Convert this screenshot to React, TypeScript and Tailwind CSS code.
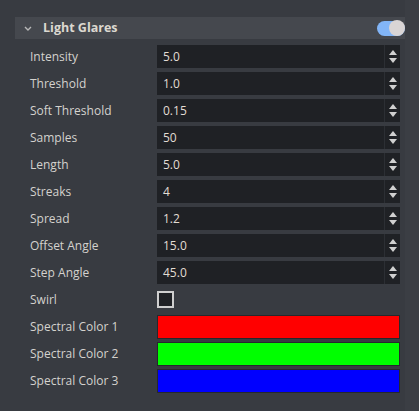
import React from 'react';

const numberRows = [
    { label: 'Intensity', value: '5.0' },
    { label: 'Threshold', value: '1.0' },
    { label: 'Soft Threshold', value: '0.15' },
    { label: 'Samples', value: '50' },
    { label: 'Length', value: '5.0' },
    { label: 'Streaks', value: '4' },
    { label: 'Spread', value: '1.2' },
    { label: 'Offset Angle', value: '15.0' },
    { label: 'Step Angle', value: '45.0' },
];

const colorRows = [
    { label: 'Spectral Color 1', color: 'bg-[#ff0000]' },
    { label: 'Spectral Color 2', color: 'bg-[#00ff00]' },
    { label: 'Spectral Color 3', color: 'bg-[#0000ff]' },
];

const Spinner: React.FC = () => (
    <div className="w-4 h-full border-l border-[#2c2f34] flex flex-col items-center justify-center gap-[3px]">
        <svg width="8" height="5" viewBox="0 0 8 5"><path d="M4 0 L8 5 L0 5 Z" fill="#d0d0d0" /></svg>
        <svg width="8" height="5" viewBox="0 0 8 5"><path d="M0 0 L8 0 L4 5 Z" fill="#d0d0d0" /></svg>
    </div>
);

const Row: React.FC<{ label: string; children: React.ReactNode }> = ({ label, children }) => (
    <div className="h-[27px] flex items-center">
        <div className="w-[142px] pl-[15px] pt-[1px] text-[12px] text-[#d4d2ce] whitespace-nowrap">{label}</div>
        <div className="w-[243px] flex items-center">{children}</div>
    </div>
);

const App: React.FC = () => {
    return (
        <div className="w-[419px] h-[411px] bg-[#383b41] flex" style={{ fontFamily: '"Open Sans", sans-serif' }}>
            <div className="w-[405px] pl-[15px] pt-[17px]">
                <div className="h-[22px] bg-[#45484e] flex items-center">
                    <svg width="8" height="5" viewBox="0 0 8 5" className="ml-[9px] mr-[11px]">
                        <path d="M1 1 L4 4 L7 1" stroke="#b8b8b8" strokeWidth="1.4" fill="none" />
                    </svg>
                    <span className="text-[12.5px] font-bold text-[#dcd8d0]">Light Glares</span>
                    <div className="ml-auto w-[28px] h-[15px] rounded-full bg-[#82b5f7] relative">
                        <div className="absolute right-0 top-[-0.5px] w-4 h-4 rounded-full bg-[#d9d5d5]" />
                    </div>
                </div>
                <div className="pt-[4px]">
                    {numberRows.map(r => (
                        <Row key={r.label} label={r.label}>
                            <div className="w-full h-[23px] bg-[#1f2125] flex items-center">
                                <span className="flex-1 pl-[6px] pt-[1px] text-[12px] text-[#e2ddd4]">{r.value}</span>
                                <Spinner />
                            </div>
                        </Row>
                    ))}
                    <Row label="Swirl">
                        <div className="w-[17px] h-[17px] border-2 border-[#cfcfcf] bg-[#1f2125]" />
                    </Row>
                    {colorRows.map(r => (
                        <Row key={r.label} label={r.label}>
                            <div className={`w-full h-6 border border-[#26282c] ${r.color}`} />
                        </Row>
                    ))}
                </div>
            </div>
            <div className="flex-1 bg-[#3b3e44]" />
        </div>
    );
};

export default App;
